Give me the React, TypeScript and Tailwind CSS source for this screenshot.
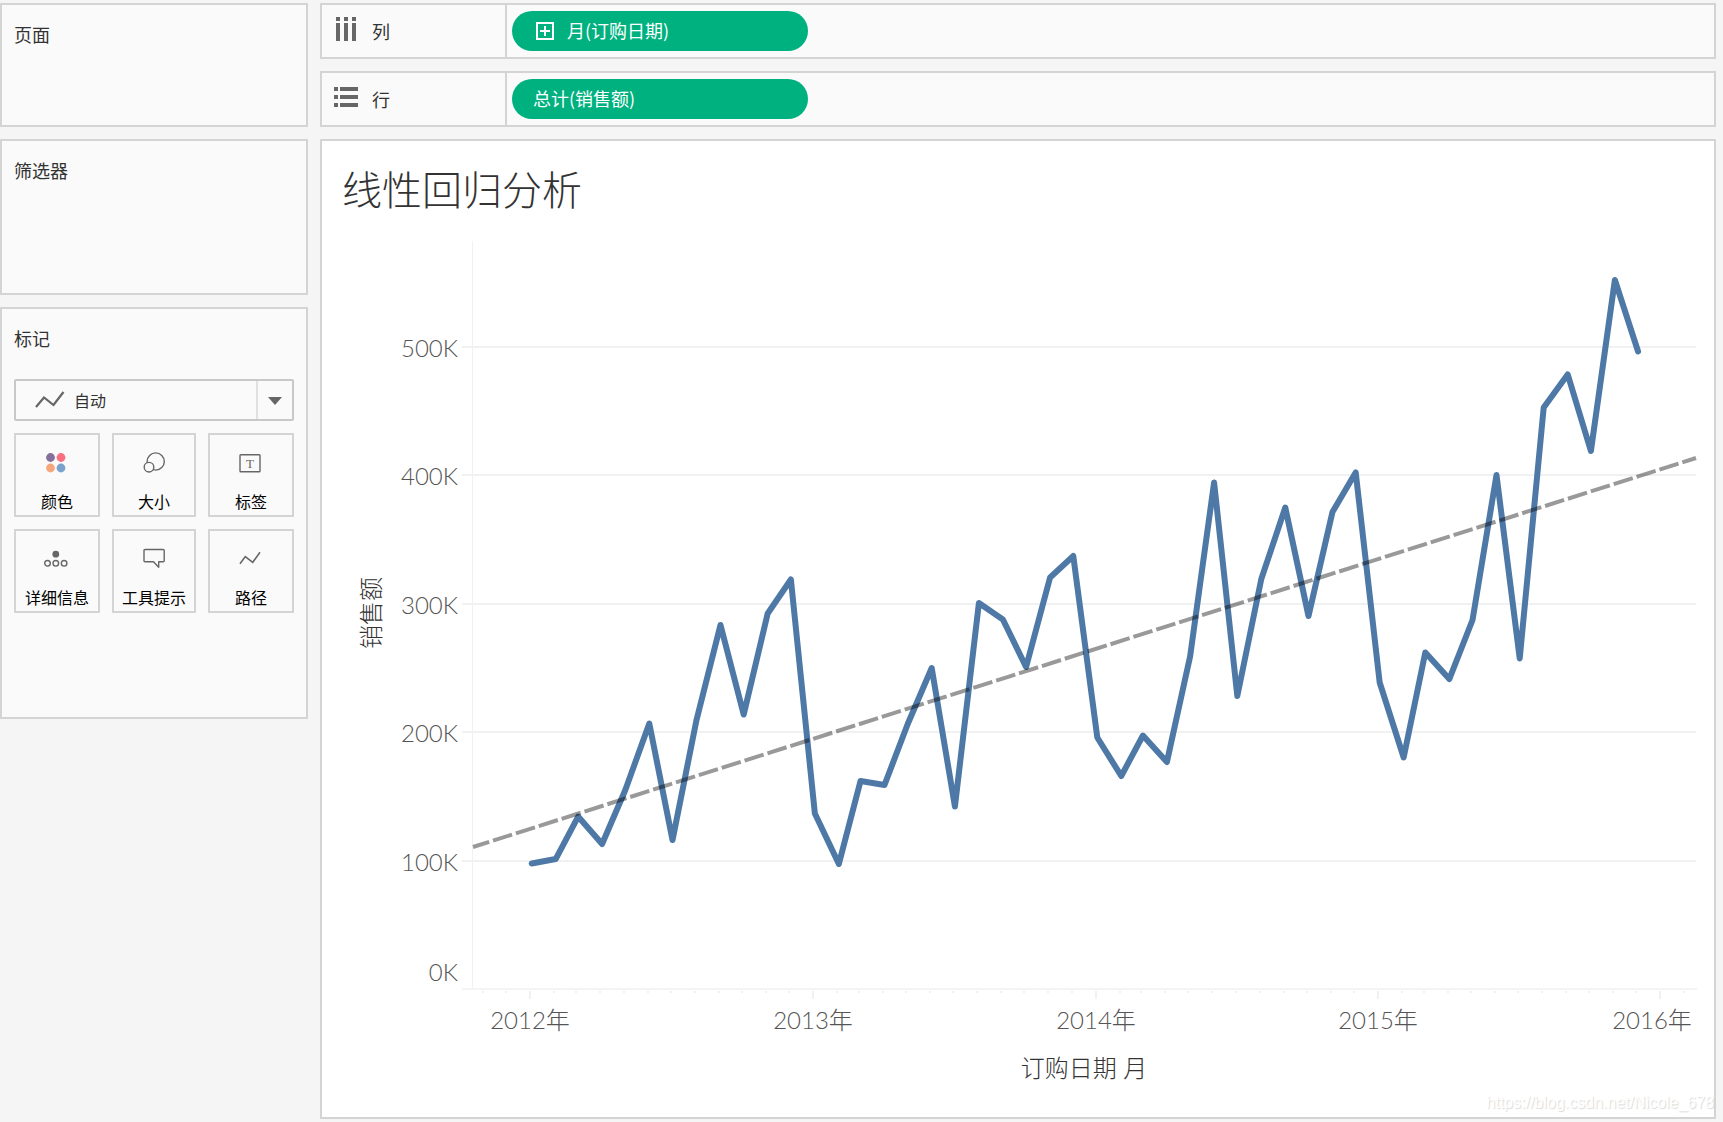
import type { ReactNode } from 'react';

// Monthly sales in thousands, Jan 2012 - Dec 2015
const sales = [
  97.7, 101.2, 134.3, 112.9, 155, 206.8, 116, 209.5, 283.5, 213.8, 292.4, 318.9,
  136.7, 97.4, 162, 158.9, 206.4, 250, 142.1, 300.6, 287.8, 250.8, 320.5, 337.2,
  195.9, 165.9, 197.4, 176.8, 259, 394.5, 228.2, 319.3, 375, 290.5, 371.5, 402.3,
  238.7, 180.3, 262.1, 241.4, 287.4, 400.3, 257.4, 452.9, 478.6, 419, 552.2, 496.5,
];

const plot = { left: 151, right: 1374, top: 12, base: 760 };

const dayOf = (month: number) =>
  (Date.UTC(2012, month, 1) - Date.UTC(2012, 0, 1)) / 86400000;
const xOf = (month: number) => 208 + dayOf(month) * 0.7737;
const yOf = (value: number) => plot.base - value * 1.284;

const valueTicks = [100, 200, 300, 400, 500];
const monthTicks = Array.from({ length: 52 }, (_, i) => i - 2);
const yearTicks = [2012, 2013, 2014, 2015, 2016];

function Card({ title, className, children }: { title: string; className: string; children?: ReactNode }) {
  return (
    <section className={`border-2 border-[#d4d4d4] bg-[#fafafa] px-3 pt-[15px] ${className}`}>
      <h2 className="text-lg leading-7">{title}</h2>
      {children}
    </section>
  );
}

function Shelf({ label, icon, children }: { label: string; icon: ReactNode; children: ReactNode }) {
  return (
    <section className="flex h-14 border-2 border-[#d4d4d4] bg-[#fafafa]">
      <div className="flex w-[185px] shrink-0 items-center gap-3 border-r-2 border-[#d4d4d4] pl-3">
        {icon}
        <h2 className="text-lg leading-7">{label}</h2>
      </div>
      <div className="flex items-center pl-[5px]">{children}</div>
    </section>
  );
}

function Pill({ children }: { children: ReactNode }) {
  return (
    <button
      type="button"
      className="flex h-10 w-[296px] items-center gap-2.5 rounded-full bg-[#00b180] px-[21px] pb-0.5 text-left text-lg text-white"
    >
      {children}
    </button>
  );
}

function MarkButton({ label, children }: { label: string; children: ReactNode }) {
  return (
    <button
      type="button"
      className="flex flex-col items-center gap-[15px] border-2 border-[#d4d4d4] pt-[15px] pb-0.5 text-black"
    >
      <svg
        viewBox="0 0 24 24"
        className="size-6 overflow-visible"
        fill="none"
        stroke="#666"
        strokeWidth="1.4"
        aria-hidden
      >
        {children}
      </svg>
      <span className="text-base leading-6 whitespace-nowrap">{label}</span>
    </button>
  );
}

function SalesChart() {
  const points = sales.map((v, i) => `${xOf(i) + 1.7},${yOf(v)}`).join(' ');

  return (
    <svg
      viewBox="0 0 1392 888"
      className="block h-auto w-full font-['Lato','Noto_Sans_CJK_SC',sans-serif] font-light"
      role="img"
      aria-label="线性回归分析"
    >
      {/* Grid and axes */}
      <g stroke="#f1f1f1" strokeWidth="2">
        {valueTicks.map((v) => (
          <line key={v} x1={plot.left - 11} x2={plot.right} y1={Math.round(yOf(v))} y2={Math.round(yOf(v))} />
        ))}
        <line x1={plot.left - 11} x2={plot.right + 1} y1={plot.base} y2={plot.base} stroke="#f4f4f4" />
        <line x1={plot.left - 0.5} x2={plot.left - 0.5} y1={plot.top} y2={plot.base} strokeWidth="1" />
        {monthTicks.map((m) => {
          const x = Math.round(xOf(m));
          return <line key={m} x1={x} x2={x} y1={plot.base + 2} y2={plot.base + (m % 12 === 0 ? 10 : 4)} />;
        })}
      </g>

      {/* Tick labels */}
      <g fill="#555" fontSize="24">
        <g textAnchor="end">
          {valueTicks.map((v) => (
            <text key={v} x="136" y={Math.round(yOf(v)) + 10}>{`${v}K`}</text>
          ))}
          <text x="136" y="752">0K</text>
        </g>
        <g textAnchor="middle">
          {yearTicks.map((year, i) => (
            <text key={year} x={Math.min(Math.round(xOf(i * 12)), 1330)} y="800">{`${year}年`}</text>
          ))}
        </g>
      </g>

      {/* Axis titles */}
      <g fill="#333" fontSize="24" textAnchor="middle">
        <text x="762" y="848">订购日期 月</text>
        <text transform="translate(58 384) rotate(-90)">销售额</text>
      </g>

      <polyline
        points={points}
        fill="none"
        stroke="#4e79a7"
        strokeWidth="6"
        strokeLinecap="round"
        strokeLinejoin="round"
      />
      <line
        x1={plot.left}
        y1="618"
        x2={plot.right}
        y2="229"
        stroke="#000"
        strokeOpacity="0.4"
        strokeWidth="4"
        strokeDasharray="20 4"
        strokeDashoffset="3"
      />
    </svg>
  );
}

export default function App() {
  return (
    <div className="flex min-h-screen gap-3 bg-[#f5f5f5] pt-[3px] pr-[7px] pb-[3px] font-['Noto_Sans_CJK_SC',sans-serif] text-[#333]">
      <aside className="flex w-[308px] shrink-0 flex-col gap-3">
        <Card title="页面" className="h-[124px]" />
        <Card title="筛选器" className="h-[156px]" />
        <Card title="标记" className="h-[412px]">
          <div className="relative mt-[27px] flex h-[42px] items-center">
            <select
              aria-label="标记类型"
              className="h-full w-full appearance-none rounded-xs border-2 border-[#c8c8c8] bg-transparent pl-[58px] text-base"
            >
              <option>自动</option>
            </select>
            <svg viewBox="0 0 280 42" className="pointer-events-none absolute inset-0 h-full w-full" aria-hidden>
              <path d="M22 28 30 18.5 39.5 26 49.5 13" fill="none" stroke="#666" strokeWidth="2.2" />
              <path d="M243 2v38" stroke="#e0e0e0" strokeWidth="2" />
              <path d="M254 18h14l-7 8z" fill="#666" />
            </svg>
          </div>

          <div className="mt-3 grid grid-cols-[1fr_84px_1fr] gap-3">
            <MarkButton label="颜色">
              <g stroke="none">
                <circle cx="5.5" cy="7.5" r="4.4" fill="#85709b" />
                <circle cx="16" cy="7.5" r="4.4" fill="#fa7080" />
                <circle cx="5.5" cy="18" r="4.4" fill="#f4a77c" />
                <circle cx="16" cy="18" r="4.4" fill="#7ba2cc" />
              </g>
            </MarkButton>
            <MarkButton label="大小">
              <circle cx="13.7" cy="11.5" r="8.6" />
              <circle cx="7" cy="17.2" r="4.8" fill="#fafafa" />
            </MarkButton>
            <MarkButton label="标签">
              <rect x="1" y="4.7" width="20" height="17" rx="0.8" />
              <text
                x="11"
                y="17.5"
                fontSize="13"
                textAnchor="middle"
                fill="#666"
                stroke="none"
                className="font-['Liberation_Serif',serif]"
              >
                T
              </text>
            </MarkButton>
            <MarkButton label="详细信息">
              <circle cx="10.8" cy="8.2" r="3.4" fill="#666" stroke="none" />
              <circle cx="2.5" cy="17.3" r="2.8" />
              <circle cx="10.8" cy="17.3" r="2.8" />
              <circle cx="19.1" cy="17.3" r="2.8" />
            </MarkButton>
            <MarkButton label="工具提示">
              <path
                d="M3 3.5h18.2q1 0 1 1v10.2q0 1-1 1h-4.500v5.500l-5.200-5.500H3q-1 0-1-1V4.500q0-1 1-1z"
                strokeLinejoin="round"
              />
            </MarkButton>
            <MarkButton label="路径">
              <path d="M1 17.7 6.3 10.6 13.7 16.3 21 6.3" strokeWidth="1.6" />
            </MarkButton>
          </div>
        </Card>
      </aside>

      <main className="flex min-w-0 flex-1 flex-col gap-3">
        <Shelf
          label="列"
          icon={
            <svg viewBox="0 0 26 28" className="h-7 w-[26px]" fill="#666" aria-hidden>
              <path d="M2 0h4v4H2zM10 0h4v4h-4zM18 0h4v4h-4zM2 6h4v18H2zM10 6h4v18h-4zM18 6h4v18h-4z" />
            </svg>
          }
        >
          <Pill>
            <svg viewBox="0 0 24 20" className="h-5 w-6" fill="none" stroke="#fff" strokeWidth="2" aria-hidden>
              <path d="M4 3h16v16H4zM7 11h10M12 6v10" />
            </svg>
            月(订购日期)
          </Pill>
        </Shelf>

        <Shelf
          label="行"
          icon={
            <svg viewBox="0 0 26 24" className="h-6 w-[26px]" fill="#666" aria-hidden>
              <path d="M0 0h4v4H0zM0 8h4v4H0zM0 16h4v4H0zM6 0h18v4H6zM6 8h18v4H6zM6 16h18v4H6z" />
            </svg>
          }
        >
          <Pill>总计(销售额)</Pill>
        </Shelf>

        <section className="relative flex-1 border-2 border-[#d4d4d4] bg-white">
          <h1 className="h-[88px] pt-[17px] pl-5 text-[40px] leading-[60px] font-light">线性回归分析</h1>
          <SalesChart />
          <a
            href="#"
            className="absolute right-0 bottom-0 font-['Liberation_Sans',sans-serif] text-base leading-7 text-white [text-shadow:1px_1px_1px_#d8d8d8]"
          >
            https://blog.csdn.net/Nicole_678
          </a>
        </section>
      </main>
    </div>
  );
}
